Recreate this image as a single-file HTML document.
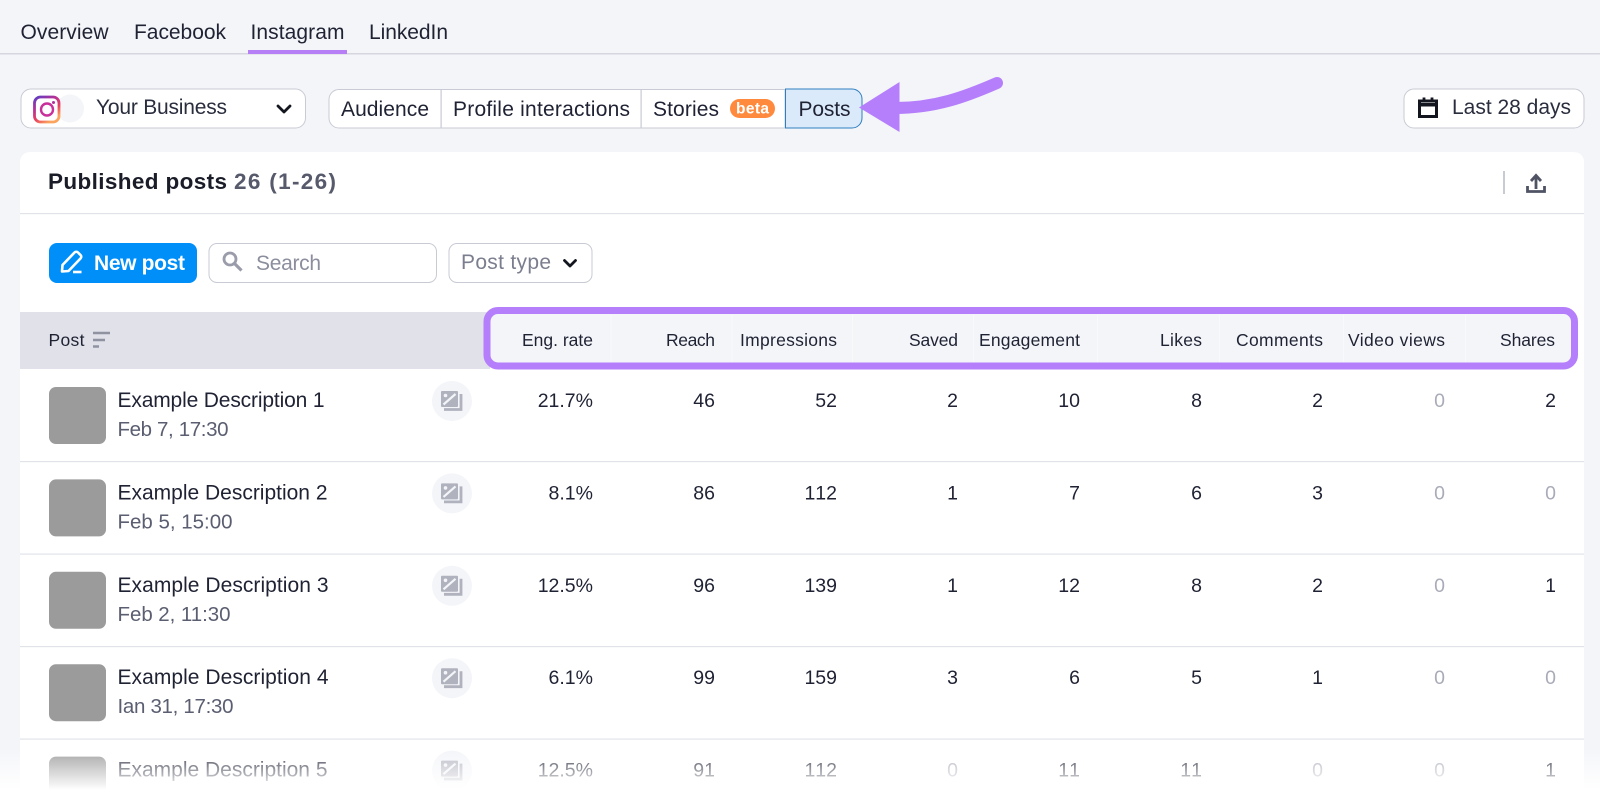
<!DOCTYPE html>
<html lang="en">
<head>
<meta charset="utf-8">
<title>Published posts</title>
<style>
html,body{margin:0;padding:0;background:#f4f5f9;width:1600px;height:802px;overflow:hidden}
svg{display:block;position:absolute;left:0;top:0}
text{font-family:"Liberation Sans",Arial,sans-serif;fill:#1f2233}
.t{font-size:21px}
.h{font-size:17.5px}
.d{font-size:20.5px;fill:#5a5e70}
.n{font-size:19.5px;text-anchor:end;font-kerning:none}
.z{font-size:19.5px;text-anchor:end;fill:#a9abb8;font-kerning:none}
</style>
</head>
<body>
<svg width="1600" height="802" viewBox="0 0 1600 802" xmlns="http://www.w3.org/2000/svg">
<defs>
<linearGradient id="ig" x1="0" y1="0" x2="0.6" y2="1">
<stop offset="0" stop-color="#5b3fc4"/><stop offset="0.35" stop-color="#b0309a"/><stop offset="0.7" stop-color="#e8405f"/><stop offset="1" stop-color="#fba45e"/>
</linearGradient>
<linearGradient id="fade" x1="0" y1="0" x2="0" y2="1">
<stop offset="0" stop-color="#fff" stop-opacity="0"/><stop offset="0.3" stop-color="#fff" stop-opacity="0.35"/><stop offset="1" stop-color="#fff" stop-opacity="1"/>
</linearGradient>
<g id="imgicon">
<circle cx="452" cy="401" r="20" fill="#f4f5f9"/>
<rect x="441" y="391" width="17" height="16" rx="1" fill="#b0b2be"/>
<path d="M443.500 404.500 L455.500 394" fill="none" stroke="#f4f5f9" stroke-width="2.200"/>
<circle cx="445.500" cy="395.500" r="1.800" fill="#f4f5f9"/>
<path d="M461 394 V409.500 H444" fill="none" stroke="#b0b2be" stroke-width="2.800"/>
</g>
</defs>

<!-- tabs -->
<rect x="0" y="53" width="1600" height="1.500" fill="#d5d6de"/>
<rect x="248" y="50" width="99" height="4" fill="#b77ff5"/>
<text class="t" x="20.500" y="39" textLength="88" lengthAdjust="spacing">Overview</text>
<text class="t" x="134" y="39" textLength="92" lengthAdjust="spacing">Facebook</text>
<text class="t" x="250.500" y="39" textLength="94" lengthAdjust="spacing">Instagram</text>
<text class="t" x="369" y="39" textLength="79" lengthAdjust="spacing">LinkedIn</text>

<!-- account select -->
<rect x="21" y="89" width="284.500" height="39" rx="10" fill="#fff" stroke="#c9cbd4" stroke-width="1"/>
<circle cx="70" cy="108.500" r="14" fill="#f4f5f9"/>
<rect x="34.500" y="97" width="24.500" height="25" rx="6" fill="#fff" stroke="url(#ig)" stroke-width="2.800"/>
<circle cx="47" cy="109.500" r="6" fill="none" stroke="#c8309a" stroke-width="2.400"/>
<circle cx="53.500" cy="102.500" r="1.500" fill="#b0309a"/>
<text class="t" x="96" y="114" textLength="131" lengthAdjust="spacing" style="fill:#2a2d3d">Your Business</text>
<path d="M278 106 L284 112 L290 106" fill="none" stroke="#14161f" stroke-width="2.800" stroke-linecap="round" stroke-linejoin="round"/>

<!-- segmented control -->
<path d="M339 89.500 H785 V128 H339 A10 10 0 0 1 329 118 V99.500 A10 10 0 0 1 339 89.500 Z" fill="#fff" stroke="#c9cbd4" stroke-width="1"/>
<rect x="440.500" y="89.500" width="1.200" height="38.500" fill="#c9cbd4"/>
<rect x="640.500" y="89.500" width="1.200" height="38.500" fill="#c9cbd4"/>
<path d="M785.500 89 H852 A10 10 0 0 1 862 99 V118 A10 10 0 0 1 852 128 H785.500 Z" fill="#dbeafa" stroke="#2f7fbf" stroke-width="1"/>
<text class="t" x="341" y="116" textLength="88" lengthAdjust="spacing">Audience</text>
<text class="t" x="453" y="116" textLength="177" lengthAdjust="spacing">Profile interactions</text>
<text class="t" x="653" y="116" textLength="66" lengthAdjust="spacing">Stories</text>
<rect x="730" y="99" width="45" height="19" rx="9.500" fill="#ff8a3d"/>
<text x="736" y="113.500" textLength="33" lengthAdjust="spacing" style="font-size:15.500px;font-weight:700;fill:#fff">beta</text>
<text class="t" x="798.500" y="116" textLength="52" lengthAdjust="spacing">Posts</text>

<!-- arrow -->
<path d="M895 108 C935 108 965 97 997 83" fill="none" stroke="#b57ffb" stroke-width="12" stroke-linecap="round"/>
<path d="M859 107.500 L899.500 82 V132 Z" fill="#b57ffb"/>

<!-- date button -->
<rect x="1404" y="89" width="180" height="39" rx="10" fill="#fff" stroke="#c9cbd4" stroke-width="1"/>
<path d="M1419.500 101 H1436.500 V116.500 H1419.500 Z" fill="none" stroke="#14161f" stroke-width="3"/>
<rect x="1419.500" y="103" width="17" height="3.500" fill="#14161f"/>
<path d="M1424 97.500 V102 M1432 97.500 V102" stroke="#14161f" stroke-width="2.800"/>
<text class="t" x="1452" y="114" textLength="119" lengthAdjust="spacing" style="fill:#2a2d3d">Last 28 days</text>

<!-- card -->
<path d="M20 162 A10 10 0 0 1 30 152 H1574 A10 10 0 0 1 1584 162 V802 H20 Z" fill="#fff"/>
<rect x="20" y="213" width="1564" height="1.200" fill="#e2e3e9"/>
<text x="48" y="189" textLength="179" lengthAdjust="spacing" style="font-size:22.500px;font-weight:700;fill:#1a1c28">Published posts</text>
<text x="234" y="189" textLength="102" lengthAdjust="spacing" style="font-size:22.500px;font-weight:700;fill:#565a6b">26 (1-26)</text>
<rect x="1503" y="171" width="2" height="23" fill="#c9cbd4"/>
<path d="M1536 189 V177 M1531 181 L1536 175.500 L1541 181" fill="none" stroke="#4f5364" stroke-width="2.800"/>
<path d="M1527.500 186 V191.500 H1544.500 V186" fill="none" stroke="#4f5364" stroke-width="2.800"/>

<!-- toolbar -->
<rect x="49" y="243" width="148" height="40" rx="8" fill="#008ff8"/>
<path d="M62 271.500 L62.500 265 L74.500 252.500 A2.500 2.500 0 0 1 78 252.500 L80.500 255 A2.500 2.500 0 0 1 80.500 258.500 L68.500 271 Z" fill="none" stroke="#fff" stroke-width="2.600" stroke-linejoin="round"/>
<path d="M73 272 H81.500" stroke="#fff" stroke-width="2.600"/>
<text x="94" y="270" textLength="91" lengthAdjust="spacing" style="font-size:21px;font-weight:700;fill:#fff">New post</text>

<rect x="209" y="243.500" width="227.500" height="39" rx="8" fill="#fff" stroke="#c9cbd4" stroke-width="1"/>
<circle cx="230" cy="259" r="6" fill="none" stroke="#9a9caa" stroke-width="2.800"/>
<path d="M234.500 263.500 L241.500 270.500" stroke="#9a9caa" stroke-width="3.200"/>
<text class="t" x="256" y="270" textLength="65" lengthAdjust="spacing" style="fill:#8b8e9d">Search</text>

<rect x="449" y="243.500" width="143" height="39" rx="8" fill="#fff" stroke="#c9cbd4" stroke-width="1"/>
<text class="t" x="461" y="269" textLength="90" lengthAdjust="spacing" style="fill:#7b7e8e">Post type</text>
<path d="M564.500 260.500 L570 266 L575.500 260.500" fill="none" stroke="#14161f" stroke-width="2.800" stroke-linecap="round" stroke-linejoin="round"/>

<!-- table header -->
<rect x="20" y="312" width="470" height="57" fill="#e0e1e9"/>
<rect x="487" y="311" width="1087.500" height="55" rx="11" fill="#f4f5f9"/>
<g fill="#f8f9fb">
<rect x="610.500" y="315" width="1" height="47"/><rect x="731.500" y="315" width="1" height="47"/><rect x="852" y="315" width="1" height="47"/><rect x="973" y="315" width="1" height="47"/><rect x="1097" y="315" width="1" height="47"/><rect x="1219" y="315" width="1" height="47"/><rect x="1343" y="315" width="1" height="47"/><rect x="1465" y="315" width="1" height="47"/>
</g>
<rect x="487" y="310.500" width="1087.500" height="55.500" rx="11" fill="none" stroke="#b57ffb" stroke-width="7"/>
<text class="h" x="48.500" y="346" textLength="36" lengthAdjust="spacing">Post</text>
<path d="M93 333 H110 M93 340 H105 M93 346.500 H99" stroke="#8f92a1" stroke-width="2.400"/>
<text class="h" x="522" y="346" textLength="71" lengthAdjust="spacing">Eng. rate</text>
<text class="h" x="666" y="346" textLength="49" lengthAdjust="spacing">Reach</text>
<text class="h" x="740" y="346" textLength="97" lengthAdjust="spacing">Impressions</text>
<text class="h" x="909" y="346" textLength="49" lengthAdjust="spacing">Saved</text>
<text class="h" x="979" y="346" textLength="101" lengthAdjust="spacing">Engagement</text>
<text class="h" x="1160" y="346" textLength="42" lengthAdjust="spacing">Likes</text>
<text class="h" x="1236" y="346" textLength="87" lengthAdjust="spacing">Comments</text>
<text class="h" x="1348" y="346" textLength="97" lengthAdjust="spacing">Video views</text>
<text class="h" x="1500" y="346" textLength="55" lengthAdjust="spacing">Shares</text>

<!-- row separators -->
<g fill="#e2e3e9">
<rect x="20" y="461" width="1564" height="1.200"/>
<rect x="20" y="553.500" width="1564" height="1.200"/>
<rect x="20" y="646" width="1564" height="1.200"/>
<rect x="20" y="738.500" width="1564" height="1.200"/>
</g>

<!-- row 1 -->
<g>
<rect x="49" y="387" width="57" height="57" rx="7" fill="#9b9b9b"/>
<text class="t" x="117.500" y="407" textLength="207" lengthAdjust="spacing">Example Description 1</text>
<text class="d" x="117.500" y="436" textLength="111" lengthAdjust="spacing">Feb 7, 17:30</text>
<use href="#imgicon"/>
<text class="n" x="593" y="407">21.7%</text><text class="n" x="715" y="407">46</text><text class="n" x="837" y="407">52</text><text class="n" x="958" y="407">2</text><text class="n" x="1080" y="407">10</text><text class="n" x="1202" y="407">8</text><text class="n" x="1323" y="407">2</text><text class="z" x="1445" y="407">0</text><text class="n" x="1556" y="407">2</text>
</g>
<!-- row 2 -->
<g transform="translate(0,92.400)">
<rect x="49" y="387" width="57" height="57" rx="7" fill="#9b9b9b"/>
<text class="t" x="117.500" y="407" textLength="210" lengthAdjust="spacing">Example Description 2</text>
<text class="d" x="117.500" y="436" textLength="115" lengthAdjust="spacing">Feb 5, 15:00</text>
<use href="#imgicon"/>
<text class="n" x="593" y="407">8.1%</text><text class="n" x="715" y="407">86</text><text class="n" x="837" y="407">112</text><text class="n" x="958" y="407">1</text><text class="n" x="1080" y="407">7</text><text class="n" x="1202" y="407">6</text><text class="n" x="1323" y="407">3</text><text class="z" x="1445" y="407">0</text><text class="z" x="1556" y="407">0</text>
</g>
<!-- row 3 -->
<g transform="translate(0,184.800)">
<rect x="49" y="387" width="57" height="57" rx="7" fill="#9b9b9b"/>
<text class="t" x="117.500" y="407" textLength="211" lengthAdjust="spacing">Example Description 3</text>
<text class="d" x="117.500" y="436" textLength="113" lengthAdjust="spacing">Feb 2, 11:30</text>
<use href="#imgicon"/>
<text class="n" x="593" y="407">12.5%</text><text class="n" x="715" y="407">96</text><text class="n" x="837" y="407">139</text><text class="n" x="958" y="407">1</text><text class="n" x="1080" y="407">12</text><text class="n" x="1202" y="407">8</text><text class="n" x="1323" y="407">2</text><text class="z" x="1445" y="407">0</text><text class="n" x="1556" y="407">1</text>
</g>
<!-- row 4 -->
<g transform="translate(0,277.200)">
<rect x="49" y="387" width="57" height="57" rx="7" fill="#9b9b9b"/>
<text class="t" x="117.500" y="407" textLength="211" lengthAdjust="spacing">Example Description 4</text>
<text class="d" x="117.500" y="436" textLength="116" lengthAdjust="spacing">Ian 31, 17:30</text>
<use href="#imgicon"/>
<text class="n" x="593" y="407">6.1%</text><text class="n" x="715" y="407">99</text><text class="n" x="837" y="407">159</text><text class="n" x="958" y="407">3</text><text class="n" x="1080" y="407">6</text><text class="n" x="1202" y="407">5</text><text class="n" x="1323" y="407">1</text><text class="z" x="1445" y="407">0</text><text class="z" x="1556" y="407">0</text>
</g>
<!-- row 5 -->
<g transform="translate(0,369.600)">
<rect x="49" y="387" width="57" height="57" rx="7" fill="#9b9b9b"/>
<text class="t" x="117.500" y="407" textLength="210" lengthAdjust="spacing">Example Description 5</text>
<use href="#imgicon"/>
<text class="n" x="593" y="407">12.5%</text><text class="n" x="715" y="407">91</text><text class="n" x="837" y="407">112</text><text class="z" x="958" y="407">0</text><text class="n" x="1080" y="407">11</text><text class="n" x="1202" y="407">11</text><text class="z" x="1323" y="407">0</text><text class="z" x="1445" y="407">0</text><text class="n" x="1556" y="407">1</text>
</g>

<!-- bottom fade -->
<rect x="0" y="748" width="1600" height="42" fill="url(#fade)"/>
<rect x="0" y="790" width="1600" height="12" fill="#fff"/>
</svg>
</body>
</html>
